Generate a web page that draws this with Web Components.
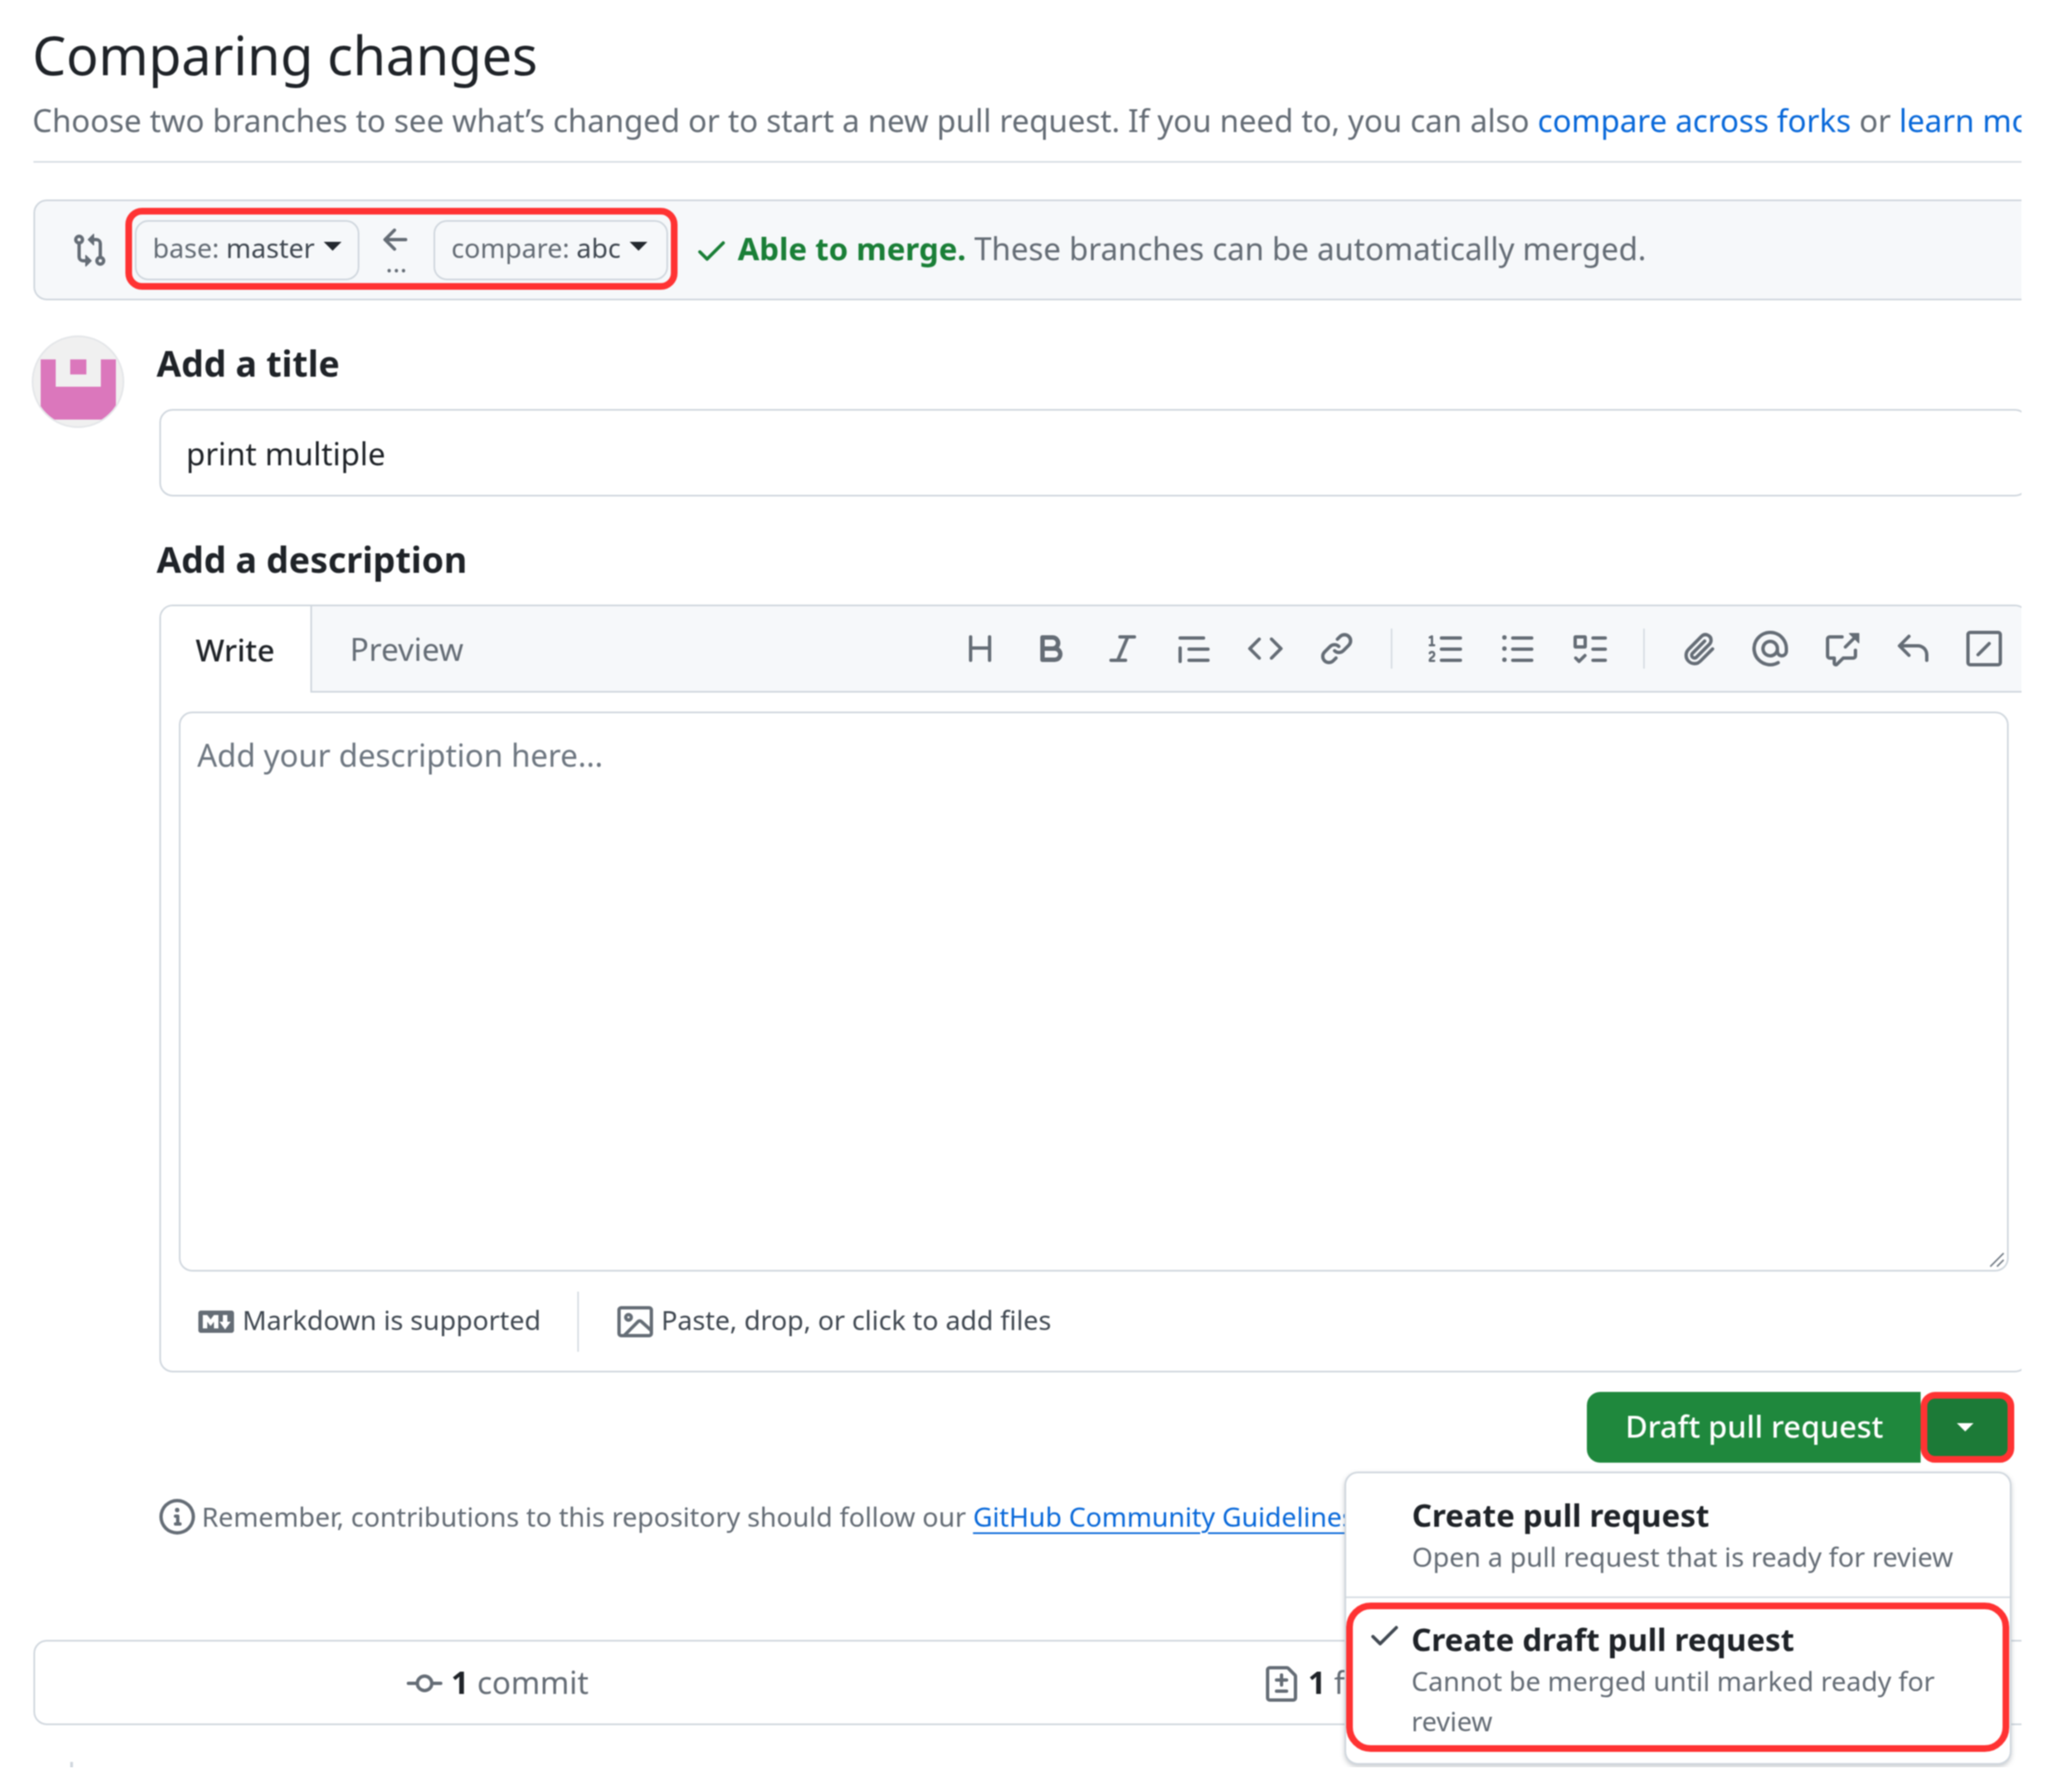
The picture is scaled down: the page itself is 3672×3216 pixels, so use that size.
<!DOCTYPE html>
<html>
<head>
<meta charset="utf-8">
<title>Comparing changes</title>
<style>
html, body { margin: 0; background: #fff; }
body { font-family: "Noto Sans", "Open Sans", sans-serif; color: #1f2328; }
</style>
</head>
<body>
<gh-page>
	<gh-head>
		<span slot="title">Comparing changes</span>
		Choose two branches to see what’s changed or to start a new pull request. If you need to, you can also <a href="#">compare across forks</a> or <a href="#">learn more about diff comparisons here</a>.
	</gh-head>
	<gh-range></gh-range>
	<gh-form></gh-form>
	<gh-stats></gh-stats>
	<gh-tick></gh-tick>
</gh-page>

<script>
// octicons, 16 unit grid
const ICONS = {
	compare: 'M9.573.677A.25.25 0 0 1 10 .854V2.5h1A2.5 2.5 0 0 1 13.5 5v5.628a2.251 2.251 0 1 1-1.5 0V5a1 1 0 0 0-1-1h-1v1.646a.25.25 0 0 1-.427.177L7.177 3.427a.25.25 0 0 1 0-.354ZM6 12v-1.646a.25.25 0 0 1 .427-.177l2.396 2.396a.25.25 0 0 1 0 .354l-2.396 2.396A.25.25 0 0 1 6 15.146V13.5H5A2.5 2.5 0 0 1 2.5 11V5.372a2.25 2.25 0 1 1 1.5 0V11a1 1 0 0 0 1 1ZM4 3.25a.75.75 0 1 0-1.5 0 .75.75 0 0 0 1.5 0ZM12.75 12a.75.75 0 1 0 0 1.5.75.75 0 0 0 0-1.5Z',
	arrow: 'M7.78 12.53a.75.75 0 0 1-1.06 0L2.47 8.28a.75.75 0 0 1 0-1.06l4.25-4.25a.751.751 0 0 1 1.042.018.751.751 0 0 1 .018 1.042L4.81 7h7.44a.75.75 0 0 1 0 1.5H4.81l2.97 2.97a.75.75 0 0 1 0 1.06Z',
	check: 'M13.78 4.22a.75.75 0 0 1 0 1.06l-7.25 7.25a.75.75 0 0 1-1.06 0L2.22 9.28a.751.751 0 0 1 .018-1.042.751.751 0 0 1 1.042-.018L6 10.94l6.72-6.72a.75.75 0 0 1 1.06 0Z',
	heading: 'M3.75 2a.75.75 0 0 1 .75.75V7h7V2.75a.75.75 0 0 1 1.5 0v10.5a.75.75 0 0 1-1.5 0V8.5h-7v4.75a.75.75 0 0 1-1.5 0V2.75A.75.75 0 0 1 3.75 2Z',
	bold: 'M4 2h4.5a3.501 3.501 0 0 1 2.852 5.53A3.499 3.499 0 0 1 9.5 14H4a1 1 0 0 1-1-1V3a1 1 0 0 1 1-1Zm1 7v3h4.5a1.5 1.5 0 0 0 0-3Zm3.5-2a1.5 1.5 0 0 0 0-3H5v3Z',
	italic: 'M6 2.75A.75.75 0 0 1 6.75 2h6.5a.75.75 0 0 1 0 1.5h-2.505l-3.858 9H9.25a.75.75 0 0 1 0 1.5h-6.5a.75.75 0 0 1 0-1.5h2.505l3.858-9H6.75A.75.75 0 0 1 6 2.75Z',
	quote: 'M1.75 2.5h10.5a.75.75 0 0 1 0 1.5H1.75a.75.75 0 0 1 0-1.5Zm4 5h8.5a.75.75 0 0 1 0 1.5h-8.5a.75.75 0 0 1 0-1.5Zm0 5h8.5a.75.75 0 0 1 0 1.5h-8.5a.75.75 0 0 1 0-1.5ZM2.5 7.75v6a.75.75 0 0 1-1.5 0v-6a.75.75 0 0 1 1.5 0Z',
	code: 'm11.28 3.22 4.25 4.25a.75.75 0 0 1 0 1.06l-4.25 4.25a.749.749 0 0 1-1.275-.326.749.749 0 0 1 .215-.734L13.94 8l-3.72-3.72a.749.749 0 0 1 .326-1.275.749.749 0 0 1 .734.215Zm-6.56 0a.751.751 0 0 1 1.042.018.751.751 0 0 1 .018 1.042L2.06 8l3.72 3.72a.749.749 0 0 1-.326 1.275.749.749 0 0 1-.734-.215L.47 8.53a.75.75 0 0 1 0-1.06Z',
	link: 'm7.775 3.275 1.25-1.25a3.5 3.5 0 1 1 4.95 4.95l-2.5 2.5a3.5 3.5 0 0 1-4.95 0 .751.751 0 0 1 .018-1.042.751.751 0 0 1 1.042-.018 1.998 1.998 0 0 0 2.83 0l2.5-2.5a2.002 2.002 0 0 0-2.83-2.83l-1.25 1.25a.751.751 0 0 1-1.042-.018.751.751 0 0 1-.018-1.042Zm-4.69 9.64a1.998 1.998 0 0 0 2.83 0l1.25-1.25a.751.751 0 0 1 1.042.018.751.751 0 0 1 .018 1.042l-1.25 1.25a3.5 3.5 0 1 1-4.95-4.95l2.5-2.5a3.5 3.5 0 0 1 4.95 0 .751.751 0 0 1-.018 1.042.751.751 0 0 1-1.042.018 1.998 1.998 0 0 0-2.83 0l-2.5 2.5a1.998 1.998 0 0 0 0 2.83Z',
	ordered: 'M5 3.25a.75.75 0 0 1 .75-.75h8.5a.75.75 0 0 1 0 1.5h-8.5A.75.75 0 0 1 5 3.25Zm0 5a.75.75 0 0 1 .75-.75h8.5a.75.75 0 0 1 0 1.5h-8.5A.75.75 0 0 1 5 8.25Zm0 5a.75.75 0 0 1 .75-.75h8.5a.75.75 0 0 1 0 1.5h-8.5a.75.75 0 0 1-.75-.75ZM.924 10.32a.5.5 0 0 1-.851-.525l.001-.001.001-.002.002-.004.007-.011c.097-.144.215-.273.348-.384.228-.19.588-.392 1.068-.392.468 0 .858.181 1.126.484.259.294.377.673.377 1.038 0 .987-.686 1.495-1.156 1.845l-.047.035c-.303.225-.522.4-.654.597h1.357a.5.5 0 0 1 0 1H.5a.5.5 0 0 1-.5-.5c0-1.005.692-1.52 1.167-1.875l.035-.025c.531-.396.8-.625.8-1.078a.57.57 0 0 0-.128-.376C1.806 10.068 1.695 10 1.5 10a.658.658 0 0 0-.429.163.835.835 0 0 0-.144.153ZM2.003 2.5V6h.503a.5.5 0 0 1 0 1H.5a.5.5 0 0 1 0-1h.503V3.308l-.28.14a.5.5 0 0 1-.446-.895l1.003-.5a.5.5 0 0 1 .723.447Z',
	unordered: 'M5.75 2.5h8.5a.75.75 0 0 1 0 1.5h-8.5a.75.75 0 0 1 0-1.5Zm0 5h8.5a.75.75 0 0 1 0 1.5h-8.5a.75.75 0 0 1 0-1.5Zm0 5h8.5a.75.75 0 0 1 0 1.5h-8.5a.75.75 0 0 1 0-1.5ZM2 14a1 1 0 1 1 0-2 1 1 0 0 1 0 2Zm1-6a1 1 0 1 1-2 0 1 1 0 0 1 2 0ZM2 4a1 1 0 1 1 0-2 1 1 0 0 1 0 2Z',
	tasklist: 'M2 2h4a1 1 0 0 1 1 1v4a1 1 0 0 1-1 1H2a1 1 0 0 1-1-1V3a1 1 0 0 1 1-1Zm4.655 8.595a.75.75 0 0 1 0 1.06L4.03 14.28a.75.75 0 0 1-1.06 0l-1.5-1.5a.749.749 0 0 1 .326-1.275.749.749 0 0 1 .734.215l.97.97 2.095-2.095a.75.75 0 0 1 1.06 0ZM9.75 2.5h5.5a.75.75 0 0 1 0 1.5h-5.5a.75.75 0 0 1 0-1.5Zm0 5h5.5a.75.75 0 0 1 0 1.5h-5.5a.75.75 0 0 1 0-1.5Zm0 5h5.5a.75.75 0 0 1 0 1.5h-5.5a.75.75 0 0 1 0-1.5Zm-7.25-9v3h3v-3Z',
	paperclip: 'M12.212 3.02a1.753 1.753 0 0 0-2.478.003l-5.83 5.83a3.007 3.007 0 0 0-.88 2.127c0 .795.315 1.551.88 2.116.567.567 1.333.89 2.126.89.79 0 1.548-.321 2.116-.89l5.48-5.48a.75.75 0 0 1 1.061 1.06l-5.48 5.48a4.492 4.492 0 0 1-3.177 1.33c-1.2 0-2.345-.487-3.187-1.33a4.483 4.483 0 0 1-1.32-3.177c0-1.195.475-2.341 1.32-3.186l5.83-5.83a3.25 3.25 0 0 1 5.553 2.297c0 .863-.343 1.691-.953 2.301L7.439 12.39c-.375.377-.884.59-1.416.593a1.998 1.998 0 0 1-1.412-.593 1.992 1.992 0 0 1 0-2.828l5.48-5.48a.751.751 0 0 1 1.042.018.751.751 0 0 1 .018 1.042l-5.48 5.48a.492.492 0 0 0 0 .707.499.499 0 0 0 .352.154.51.51 0 0 0 .356-.154l5.833-5.827a1.755 1.755 0 0 0 0-2.481Z',
	mention: 'M4.75 2.37a6.501 6.501 0 0 0 6.5 11.26.75.75 0 0 1 .75 1.298A7.999 7.999 0 0 1 .989 4.148 8 8 0 0 1 16 7.75v1.5a2.75 2.75 0 0 1-5.072 1.475 3.999 3.999 0 0 1-6.65-4.19A4 4 0 0 1 12 8v1.25a1.25 1.25 0 0 0 2.5 0V7.867a6.5 6.5 0 0 0-9.75-5.496ZM10.5 8a2.5 2.5 0 1 0-5 0 2.5 2.5 0 0 0 5 0Z',
	xref: 'M2.75 3.5a.25.25 0 0 0-.25.25v7.5c0 .138.112.25.25.25h2a.75.75 0 0 1 .75.75v2.19l2.72-2.72a.749.749 0 0 1 .53-.22h4.5a.25.25 0 0 0 .25-.25v-2.5a.75.75 0 0 1 1.5 0v2.5A1.75 1.75 0 0 1 13.25 13H9.06l-2.573 2.573A1.458 1.458 0 0 1 4 14.543V13H2.75A1.75 1.75 0 0 1 1 11.25v-7.5C1 2.784 1.784 2 2.75 2h5.5a.75.75 0 0 1 0 1.5ZM16 1.25v4.146a.25.25 0 0 1-.427.177L14.03 4.03l-3.75 3.75a.749.749 0 0 1-1.275-.326.749.749 0 0 1 .215-.734l3.75-3.75-1.543-1.543A.25.25 0 0 1 11.604 1h4.146a.25.25 0 0 1 .25.25Z',
	reply: 'M6.78 1.97a.75.75 0 0 1 0 1.06L3.81 6h6.44A4.75 4.75 0 0 1 15 10.75v2.5a.75.75 0 0 1-1.5 0v-2.5a3.25 3.25 0 0 0-3.25-3.25H3.81l2.97 2.97a.749.749 0 0 1-.326 1.275.749.749 0 0 1-.734-.215L1.47 7.28a.75.75 0 0 1 0-1.06l4.25-4.25a.75.75 0 0 1 1.06 0Z',
	slash: 'M0 1.75C0 .784.784 0 1.75 0h12.5C15.216 0 16 .784 16 1.75v12.5A1.75 1.75 0 0 1 14.25 16H1.75A1.75 1.75 0 0 1 0 14.25Zm1.75-.25a.25.25 0 0 0-.25.25v12.5c0 .138.112.25.25.25h12.5a.25.25 0 0 0 .25-.25V1.75a.25.25 0 0 0-.25-.25Zm9.03 3.72a.75.75 0 0 1 0 1.06l-5 5a.75.75 0 0 1-1.06-1.06l5-5a.75.75 0 0 1 1.06 0Z',
	markdown: 'M14.85 3c.63 0 1.15.52 1.14 1.15v7.7c0 .63-.51 1.15-1.15 1.15H1.15C.52 13 0 12.48 0 11.85v-7.7C0 3.52.52 3 1.15 3ZM9 11V5H7L5.5 7 4 5H2v6h2V8l1.5 1.92L7 8v3Zm2.99.5L14.5 8H13V5h-2v3H9.5Z',
	image: 'M16 13.25A1.75 1.75 0 0 1 14.25 15H1.75A1.75 1.75 0 0 1 0 13.25V2.75C0 1.784.784 1 1.75 1h12.5c.966 0 1.75.784 1.75 1.75ZM1.75 2.5a.25.25 0 0 0-.25.25v10.5c0 .138.112.25.25.25h.94l.03-.03 6.077-6.078a1.75 1.75 0 0 1 2.412-.06L14.5 10.31V2.75a.25.25 0 0 0-.25-.25Zm12.5 11a.25.25 0 0 0 .25-.25v-.917l-4.298-3.889a.25.25 0 0 0-.344.009L4.81 13.5ZM7 6a2 2 0 1 1-3.999.001A2 2 0 0 1 7 6ZM5.5 6a.5.5 0 1 0-1 0 .5.5 0 0 0 1 0Z',
	info: 'M0 8a8 8 0 1 1 16 0A8 8 0 0 1 0 8Zm8-6.5a6.5 6.5 0 1 0 0 13 6.5 6.5 0 0 0 0-13ZM6.5 7.75A.75.75 0 0 1 7.25 7h1a.75.75 0 0 1 .75.75v2.75h.25a.75.75 0 0 1 0 1.5h-2a.75.75 0 0 1 0-1.5h.25v-2h-.25a.75.75 0 0 1-.75-.75ZM8 6a1 1 0 1 1 0-2 1 1 0 0 1 0 2Z',
	commit: 'M11.93 8.5a4.002 4.002 0 0 1-7.86 0H.75a.75.75 0 0 1 0-1.5h3.32a4.002 4.002 0 0 1 7.86 0h3.32a.75.75 0 0 1 0 1.5Zm-1.43-.75a2.5 2.5 0 1 0-5 0 2.5 2.5 0 0 0 5 0Z',
	filediff: 'M1 1.75C1 .784 1.784 0 2.75 0h7.586c.464 0 .909.184 1.237.513l2.914 2.914c.329.328.513.773.513 1.237v9.586A1.75 1.75 0 0 1 13.25 16H2.75A1.75 1.75 0 0 1 1 14.25Zm1.75-.25a.25.25 0 0 0-.25.25v12.5c0 .138.112.25.25.25h10.5a.25.25 0 0 0 .25-.25V4.664a.25.25 0 0 0-.073-.177l-2.914-2.914a.25.25 0 0 0-.177-.073ZM8 3.25a.75.75 0 0 1 .75.75v1.5h1.5a.75.75 0 0 1 0 1.5h-1.5v1.5a.75.75 0 0 1-1.5 0V7h-1.5a.75.75 0 0 1 0-1.5h1.5V4A.75.75 0 0 1 8 3.25Zm-3 8a.75.75 0 0 1 .75-.75h4.5a.75.75 0 0 1 0 1.5h-4.5a.75.75 0 0 1-.75-.75Z'
};

// small helper, every element is the same shape: open shadow + html string
function define(name, html) {
	customElements.define(name, class extends HTMLElement {
		connectedCallback() {
			if (this.shadowRoot) return;
			this.attachShadow({ mode: 'open' }).innerHTML = typeof html === 'function' ? html(this) : html;
		}
	});
}

define('gh-icon', el => {
	const size = el.getAttribute('size') || 64;
	return `<style>
	:host { display: inline-flex; flex: none; width: ${size}px; height: ${size}px; color: var(--icon, #656d76); }
	svg { display: block; width: 100%; height: 100%; fill: currentColor; }
	</style><svg viewBox="0 0 16 16"><path d="${ICONS[el.getAttribute('name')]}"/></svg>`;
});

// the source is an upscaled screenshot, hence the slight softness
define('gh-page', `<style>
	:host { display: block; position: relative; width: 3628px; height: 3172px; overflow: hidden; padding-left: 60px; box-sizing: border-box; background: #fff; filter: blur(1px); }
</style><slot></slot>`);

define('gh-head', `<style>
	:host { display: block; width: 3700px; padding-top: 38px; padding-bottom: 39px; border-bottom: 3px solid #d8dee4; }
	.t { margin-left: -2px; font-size: 96px; line-height: 120px; font-weight: 400; color: #1f2328; white-space: nowrap; }
	.s { margin-left: -2px; margin-top: 22px; font-size: 56px; line-height: 70px; color: #656d76; white-space: nowrap; }
	::slotted(a) { color: #0969da; text-decoration: none; }
</style><div class="t"><slot name="title"></slot></div><div class="s"><slot></slot></div>`);

define('gh-annot', `<style>
	:host { display: block; border: 12px solid #ff3333; border-radius: 30px; box-sizing: border-box; }
</style><slot></slot>`);

define('gh-branch', `<style>
	:host { display: flex; align-items: center; box-sizing: border-box; height: 108px; padding: 0 29px 10px; background: #f6f8fa; border: 3px solid #d0d7de; border-radius: 24px; font-size: 48px; white-space: nowrap; color: #656d76; }
	i { width: 0; height: 0; margin-left: 16px; margin-top: -4px; border: 16px solid transparent; border-top-color: #24292f; border-bottom: 0; }
	::slotted(b) { font-weight: 400; color: #424a53; }
</style><slot></slot><i></i>`);

define('gh-range', `<style>
	:host { display: flex; align-items: center; box-sizing: border-box; width: 3700px; height: 181px; margin-top: 66px; padding-left: 66px; background: #f6f8fa; border: 3px solid #d0d7de; border-radius: 24px; }
	gh-annot { display: flex; align-items: flex-start; height: 147px; margin: -4px 29px 0 32px; padding: 10px 5px 0; border-radius: 30px; }
	.arrow { display: flex; flex-direction: column; align-items: center; width: 133px; padding-top: 4px; }
	.dots { font-size: 48px; line-height: 20px; color: #656d76; margin-top: -2px; }
	.msg { display: flex; align-items: center; gap: 15px; padding-bottom: 8px; font-size: 56px; line-height: 70px; white-space: nowrap; color: #656d76; --icon: #1a7f37; }
	.msg gh-icon { margin-top: 8px; }
	.ok { font-weight: 700; color: #1a7f37; }
</style>
<gh-icon name="compare"></gh-icon>
<gh-annot>
	<gh-branch>base:&nbsp;<b>master</b></gh-branch>
	<div class="arrow"><gh-icon name="arrow"></gh-icon><span class="dots">...</span></div>
	<gh-branch style="padding-right:34px">compare:&nbsp;<b>abc</b></gh-branch>
</gh-annot>
<div class="msg"><gh-icon name="check"></gh-icon><span><span class="ok">Able to merge.</span> These branches can be automatically merged.</span></div>`);

define('gh-toolbar', `<style>
	:host { display: flex; align-items: center; margin-left: auto; padding-right: 44px; }
	.g { display: flex; gap: 64px; }
	.d { width: 3px; height: 72px; margin: 0 65px; background: #d8dee4; }
</style>
<div class="g">
	<gh-icon name="heading"></gh-icon><gh-icon name="bold"></gh-icon><gh-icon name="italic"></gh-icon><gh-icon name="quote"></gh-icon><gh-icon name="code"></gh-icon><gh-icon name="link"></gh-icon>
</div><div class="d"></div>
<div class="g">
	<gh-icon name="ordered"></gh-icon><gh-icon name="unordered"></gh-icon><gh-icon name="tasklist"></gh-icon>
</div><div class="d"></div>
<div class="g">
	<gh-icon name="paperclip"></gh-icon><gh-icon name="mention"></gh-icon><gh-icon name="xref"></gh-icon><gh-icon name="reply"></gh-icon><gh-icon name="slash"></gh-icon>
</div>`);

define('gh-editor', `<style>
	:host { display: block; box-sizing: border-box; height: 1378px; border: 3px solid #d0d7de; border-radius: 24px; overflow: hidden; }
	header { display: flex; align-items: center; box-sizing: border-box; height: 155px; background: #f6f8fa; border-bottom: 3px solid #d0d7de; font-size: 56px; }
	.tab { display: flex; align-items: center; height: 155px; box-sizing: border-box; color: #656d76; }
	.on { width: 271px; padding-left: 62px; margin-bottom: -3px; height: 155px; background: #fff; border-right: 3px solid #d0d7de; color: #1f2328; font-size: 55px; font-weight: 500; }
	.off { padding-left: 68px; }
	.area { position: relative; box-sizing: border-box; height: 1005px; margin: 34px 32px 0 32px; padding: 39px 30px; background: #fff; border: 3px solid #d0d7de; border-radius: 24px; font-size: 56px; line-height: 70px; color: #6e7781; }
	.grip { position: absolute; right: 4px; bottom: 4px; width: 28px; height: 28px; }
	footer { display: flex; align-items: center; height: 180px; padding-left: 67px; font-size: 48px; color: #424a53; }
	.fi { display: flex; align-items: center; gap: 15px; }
	.fi span { padding-bottom: 8px; }
	.sep { width: 3px; height: 108px; margin: 0 69px 0 65px; background: #d8dee4; }
</style>
<header>
	<div class="tab on">Write</div><div class="tab off">Preview</div>
	<gh-toolbar></gh-toolbar>
</header>
<div class="area">Add your description here...
	<svg class="grip" viewBox="0 0 28 28"><path d="M2 26 26 2M14 26 26 14" stroke="#6e7781" stroke-width="2.5" fill="none"/></svg>
</div>
<footer>
	<div class="fi"><gh-icon name="markdown"></gh-icon><span>Markdown is supported</span></div>
	<div class="sep"></div>
	<div class="fi"><gh-icon name="image"></gh-icon><span>Paste, drop, or click to add files</span></div>
</footer>`);

define('gh-menu-item', el => `<style>
	:host { display: grid; grid-template-columns: 64px 1fr; column-gap: 16px; align-items: start; }
	gh-icon { margin-top: -4px; --icon: #424a53; }
	.t { font-size: 56px; line-height: 70px; font-weight: 700; color: #1f2328; }
	.d { margin-top: 5px; font-size: 48px; line-height: 72px; color: #656d76; }
</style>
<div>${el.hasAttribute('checked') ? '<gh-icon name="check"></gh-icon>' : ''}</div>
<div><div class="t">${el.getAttribute('label')}</div><div class="d"><slot></slot></div></div>`);

define('gh-menu', `<style>
	:host { position: absolute; z-index: 5; top: 143px; right: -2px; display: block; box-sizing: border-box; width: 1197px; height: 526px; background: #fff; border: 3px solid #d0d7de; border-radius: 24px; box-shadow: 0 4px 8px rgba(101,109,118,.35); }
	.a { padding: 39px 60px 35px 38px; border-bottom: 3px solid #d8dee4; }
	gh-annot { height: 268px; margin: 8px 1px 0 0; padding: 18px 50px 0 25px; border-radius: 44px; }
</style>
<div class="a"><gh-menu-item label="Create pull request">Open a pull request that is ready for review</gh-menu-item></div>
<gh-annot><gh-menu-item checked label="Create draft pull request">Cannot be merged until marked ready for review</gh-menu-item></gh-annot>`);

define('gh-split', `<style>
	:host { display: flex; position: relative; width: 760px; height: 127px; color: #fff; font-size: 55px; }
	.main { flex: 1; display: flex; align-items: center; padding-left: 69px; background: #1f883d; border-radius: 24px 0 0 24px; font-weight: 500; padding-bottom: 6px; box-sizing: border-box; }
	.drop { display: flex; align-items: center; justify-content: center; box-sizing: border-box; width: 168px; margin-right: -7px; padding-right: 8px; background: #1c7a37; border: 12px solid #ff3333; border-radius: 26px; z-index: 1; }
	.drop i { width: 0; height: 0; border: 15px solid transparent; border-top-color: #fff; border-bottom: 0; }
</style>
<div class="main">Draft pull request</div>
<div class="drop"><i></i></div>
<gh-menu></gh-menu>`);

define('gh-form', `<style>
	:host { display: grid; grid-template-columns: 226px 3354px; margin-top: 63px; }
	.av { display: block; width: 166px; height: 166px; margin-left: -3px; border-radius: 50%; overflow: hidden; background: #f0f0f0; border: 3px solid #e4e6e9; box-sizing: border-box; }
	h3 { margin: 0 0 0 -5px; font-size: 64px; line-height: 70px; font-weight: 700; color: #1f2328; }
	.one { padding-top: 15px; }
	.input { display: flex; align-items: center; box-sizing: border-box; height: 157px; margin-top: 47px; padding: 0 45px; border: 3px solid #d0d7de; border-radius: 24px; font-size: 56px; color: #1f2328; }
	.two { margin-top: 78px; margin-bottom: 46px; }
	.act { display: flex; justify-content: flex-end; margin-top: 35px; padding-right: 32px; }
	.note { display: flex; align-items: center; gap: 12px; margin-top: 61px; height: 70px; margin-bottom: 2px; font-size: 48px; color: #656d76; white-space: nowrap; }
	.note gh-icon { margin-top: 2px; }
	.note a { color: #0969da; text-decoration: underline; text-underline-offset: 10px; text-decoration-thickness: 3px; }
</style>
<svg class="av" viewBox="0 0 160 160" shape-rendering="crispEdges">
	<path fill="#db77bc" d="M13 40h27v49h81V40h27v108H13Z"/><path fill="#db77bc" d="M66 40h29v27H66Z"/>
</svg>
<div>
	<h3 class="one">Add a title</h3>
	<div class="input">print multiple</div>
	<h3 class="two">Add a description</h3>
	<gh-editor></gh-editor>
	<div class="act"><gh-split></gh-split></div>
	<div class="note"><gh-icon name="info"></gh-icon><span>Remember, contributions to this repository should follow our <a href="#">GitHub Community Guidelines</a> when creating your pull request.</span></div>
</div>`);

define('gh-stats', `<style>
	:host { display: grid; grid-template-columns: 1660px 1538px 1664px; box-sizing: border-box; width: 4862px; height: 153px; margin-top: 185px; border: 3px solid #d0d7de; border-radius: 24px; font-size: 56px; color: #656d76; background: #fff; }
	div { display: flex; align-items: center; justify-content: center; gap: 16px; padding-bottom: 4px; }
	gh-icon { margin-top: 8px; }
	b { color: #1f2328; font-weight: 700; }
</style>
<div><gh-icon name="commit"></gh-icon><span><b>1</b> commit</span></div>
<div><gh-icon name="filediff"></gh-icon><span><b>1</b> file changed</span></div>
<div><span><b>1</b> contributor</span></div>`);

// the small mark left at the bottom edge of the crop
define('gh-tick', `<style>
	:host { display: block; width: 5px; height: 12px; margin: 66px 0 0 66px; background: #d0d7de; }
</style>`);
</script>
</body>
</html>
